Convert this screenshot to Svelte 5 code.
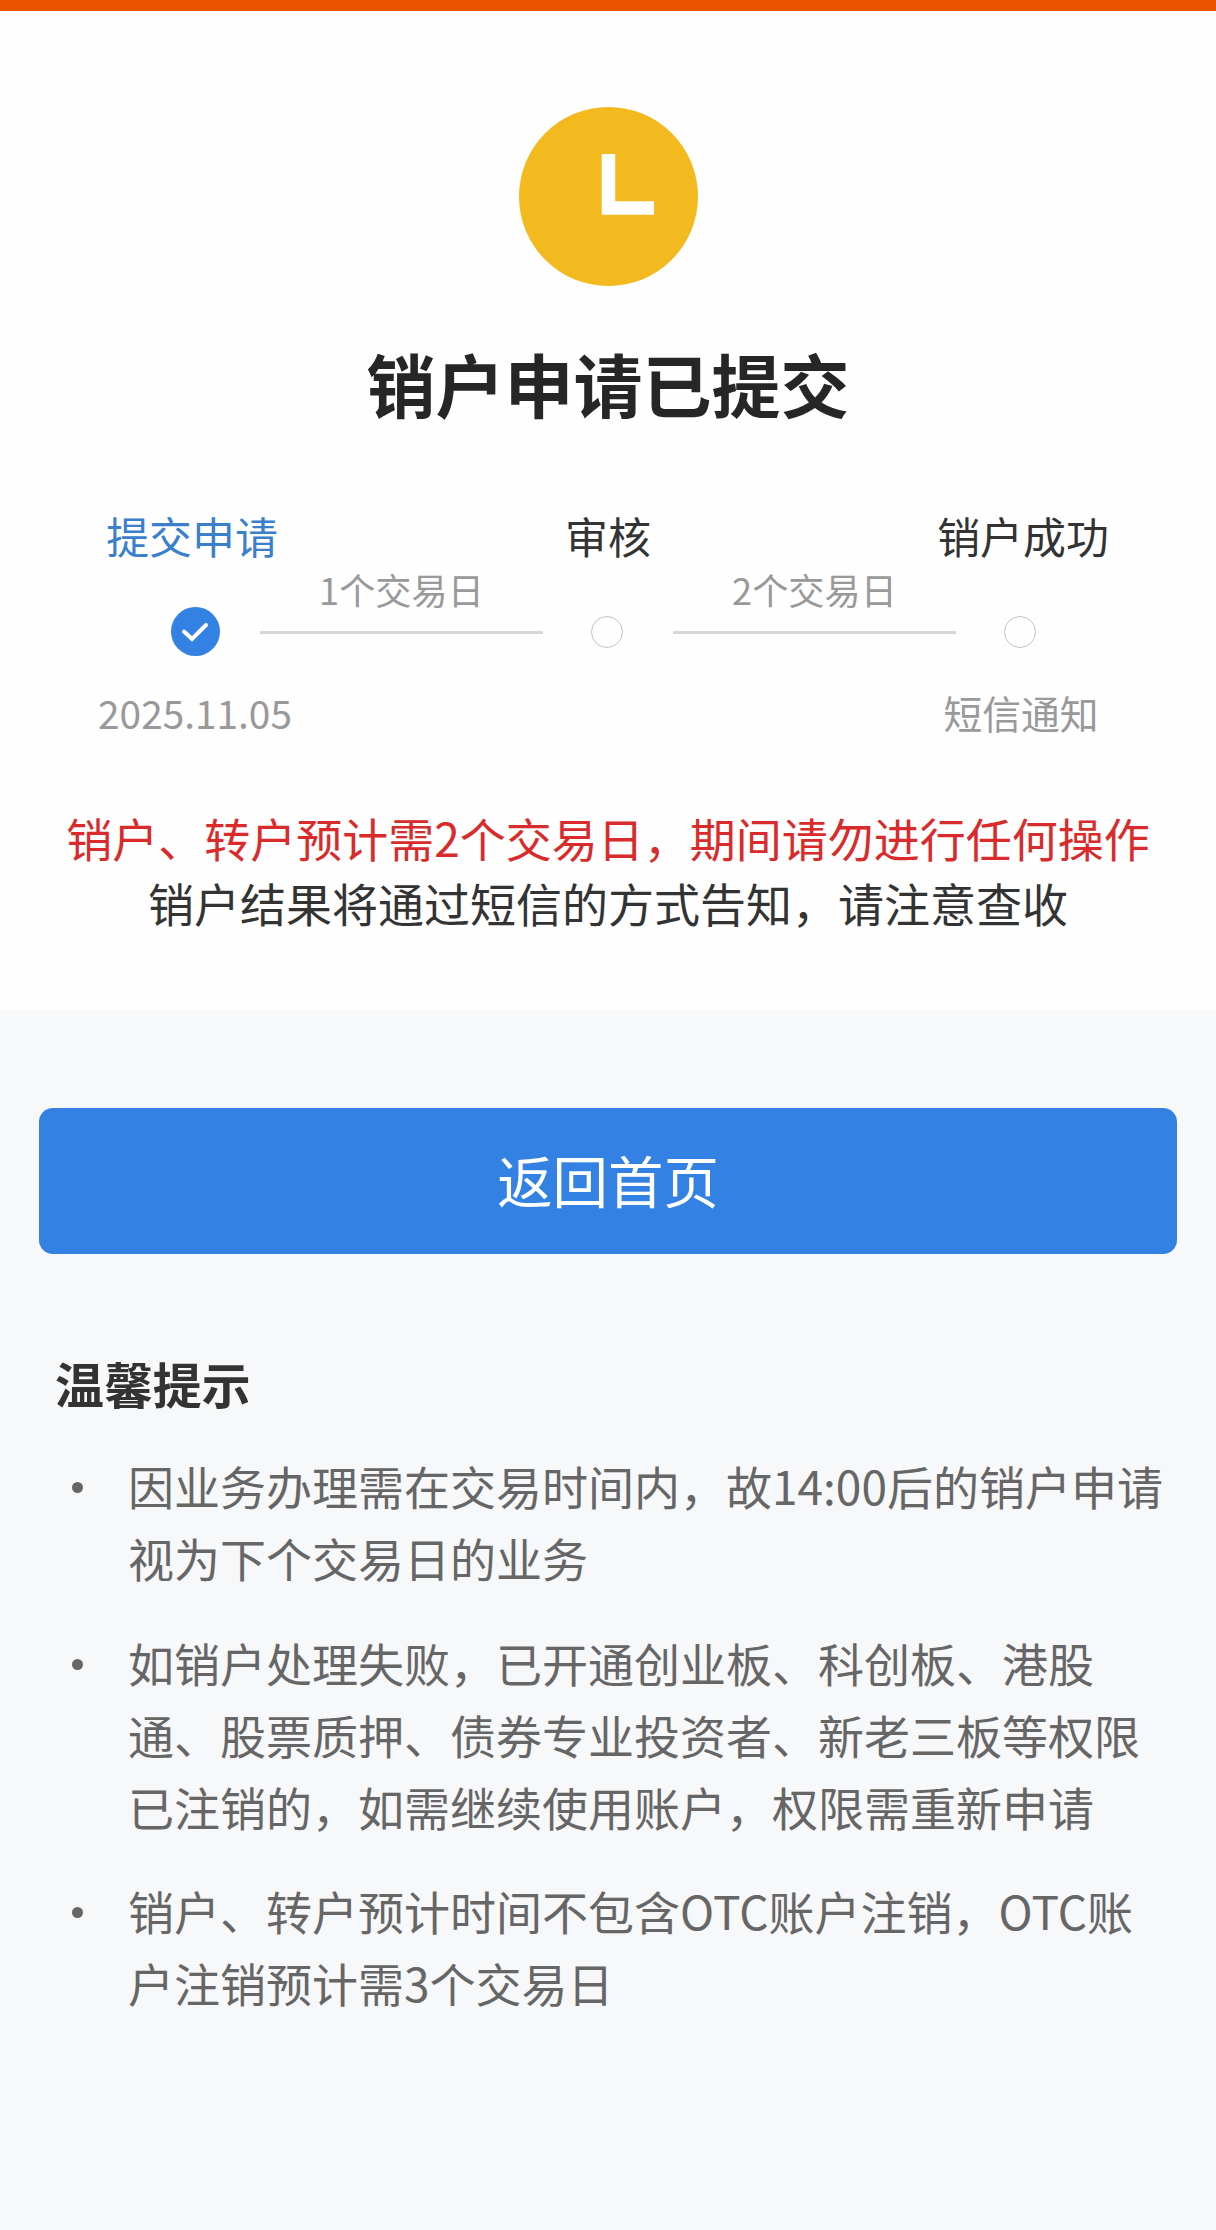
<script>
  const steps = [
    { label: '提交申请', note: '2025.11.05', state: 'done', wait: '1个交易日' },
    { label: '审核', note: '', state: 'todo', wait: '2个交易日' },
    { label: '销户成功', note: '短信通知', state: 'last', wait: '' }
  ];

  const tips = [
    ['因业务办理需在交易时间内，故14:00后的销户申请', '视为下个交易日的业务'],
    [
      '如销户处理失败，已开通创业板、科创板、港股',
      '通、股票质押、债券专业投资者、新老三板等权限',
      '已注销的，如需继续使用账户，权限需重新申请'
    ],
    ['销户、转户预计时间不包含OTC账户注销，OTC账', '户注销预计需3个交易日']
  ];
</script>

<div class="page">
  <div class="top-bar"></div>
  <section class="result">
    <svg class="clock" viewBox="0 0 179 179" aria-hidden="true">
      <circle cx="89.5" cy="89.5" r="89.5" fill="#f2ba1e" />
      <path d="M89.5 47V101H135" fill="none" stroke="#fff" stroke-width="13.5" />
    </svg>
    <h1>销户申请已提交</h1>

    <div class="steps">
      {#each steps as step}
        <div class="step {step.state}">
          <span class="label">{step.label}</span>
          <span class="marker">
            {#if step.state === 'done'}
              <svg viewBox="0 0 49 49" aria-hidden="true">
                <circle cx="24.5" cy="24.5" r="24.5" fill="#3381e3" />
                <path
                  d="M13 24.5L21 32L35 18"
                  fill="none"
                  stroke="#fff"
                  stroke-width="4"
                  stroke-linecap="round"
                />
              </svg>
            {:else}
              <i class="ring"></i>
            {/if}
          </span>
          <span class="note">{step.note}</span>
        </div>
        {#if step.wait}
          <div class="link">{step.wait}</div>
        {/if}
      {/each}
    </div>

    <p class="warn">销户、转户预计需2个交易日，期间请勿进行任何操作</p>
    <p>销户结果将通过短信的方式告知，请注意查收</p>
  </section>

  <section class="lower">
    <button type="button">返回首页</button>
    <h2>温馨提示</h2>
    <ul>
      {#each tips as lines}
        <li>
          {#each lines as line}<span>{line}</span>{/each}
        </li>
      {/each}
    </ul>
  </section>
</div>

<style>
  :global(body) {
    margin: 0;
    background: #f7f8fa;
  }
  .page {
    width: 1216px;
    height: 2230px;
    overflow: hidden;
    background: #f7f8fa;
    color: #333;
    font-family: 'Noto Sans CJK SC', sans-serif;
    text-spacing-trim: space-all;
    white-space: nowrap;
  }
  .top-bar {
    height: 11px;
    background: #eb5500;
  }
  .result {
    box-sizing: border-box;
    height: 999px;
    padding-top: 96px;
    background: #fefefe;
    display: flex;
    flex-direction: column;
    align-items: center;
  }
  .clock {
    display: block;
    width: 179px;
    height: 179px;
  }
  h1 {
    margin: 57px 0 0;
    font-size: 69px;
    line-height: 80px;
    font-weight: 700;
    color: #262626;
  }
  .steps {
    margin-top: 82px;
    display: grid;
    grid-template-columns: 130px 283px 130px 283px 130px;
    height: 240px;
  }
  .step {
    display: flex;
    flex-direction: column;
    align-items: center;
  }
  .label {
    height: 60px;
    margin-bottom: 12px;
    line-height: 60px;
    font-size: 42.9px;
  }
  .done .label {
    color: #3a7fcc;
    margin-left: -6px;
  }
  .last .label {
    margin-left: 4px;
  }
  .marker {
    height: 109px;
    display: flex;
    align-items: center;
  }
  .marker svg {
    display: block;
    width: 49px;
    height: 49px;
  }
  .ring {
    box-sizing: border-box;
    width: 32px;
    height: 32px;
    margin-right: 2px;
    border: 1px solid #c4c4c4;
    border-radius: 50%;
  }
  .note {
    height: 52px;
    line-height: 52px;
    font-size: 38.8px;
    color: #999;
  }
  .link {
    height: 76px;
    margin-top: 50px;
    border-bottom: 3px solid #d3d7d9;
    line-height: 69px;
    font-size: 36.2px;
    text-align: center;
    color: #999;
  }
  p {
    margin: 0;
    font-size: 46px;
    line-height: 65px;
  }
  .warn {
    margin-top: 60px;
    color: #d92b2b;
  }
  .lower {
    padding: 98px 39px 0;
  }
  button {
    box-sizing: border-box;
    display: block;
    width: 1138px;
    height: 146px;
    padding: 0 0 4px;
    border: 0;
    border-radius: 14px;
    background: #3381e3;
    color: #fff;
    font-family: inherit;
    font-size: 55.4px;
    line-height: 142px;
  }
  h2 {
    margin: 99px 0 0 16px;
    font-size: 48.9px;
    line-height: 60px;
    font-weight: 700;
  }
  ul {
    margin: 36px 0 0;
    padding: 0 0 0 33px;
    list-style: none;
    display: flex;
    flex-direction: column;
    gap: 32.5px;
    color: #666;
    font-size: 46px;
    line-height: 72px;
  }
  li {
    display: grid;
    grid-template-columns: 11px auto;
    column-gap: 45px;
  }
  li::before {
    content: '';
    width: 11px;
    height: 11px;
    margin-top: 33px;
    border-radius: 50%;
    background: #666;
  }
  li span {
    grid-column: 2;
  }
  li span:first-child {
    grid-row: 1;
  }
</style>
